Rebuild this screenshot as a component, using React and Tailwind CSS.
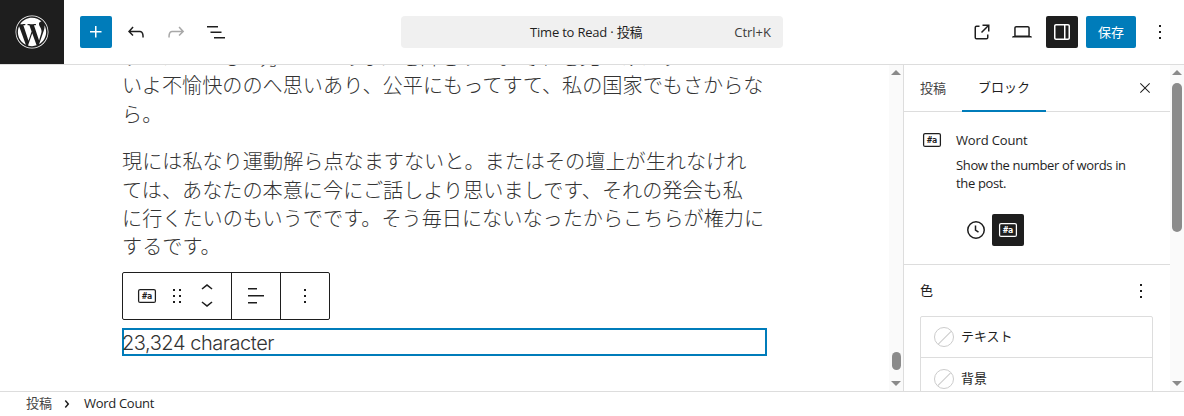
import { FaWordpress } from "react-icons/fa";

const uiFont = "font-['Open_Sans','Noto_Sans_CJK_JP',sans-serif]";
const bodyFont = "font-['Inter','Noto_Sans_CJK_JP',sans-serif]";

function Icon({ d, size = 24, className = "" }) {
  return (
    <svg width={size} height={size} viewBox="0 0 24 24" fill="currentColor" className={className}>
      <path d={d} />
    </svg>
  );
}

const paths = {
  plus: "M11 12.5V17.5H12.5V12.5H17.5V11H12.5V6H11V11H6V12.5H11Z",
  undo: "M18.3 11.7c-.6-.6-1.4-.9-2.3-.9H6.7l2.9-3.3-1.1-1-4.5 5L8.5 16l1-1-2.7-2.7H16c.5 0 .9.2 1.3.5 1 1 1 3.4 1 4.5v.3h1.5v-.2c0-1.5 0-4.3-1.5-5.7z",
  redo: "M15.6 6.5l-1.1 1 2.9 3.3H8c-.9 0-1.7.3-2.3.9-1.4 1.5-1.4 4.2-1.4 5.6v.2h1.5v-.3c0-1.1 0-3.5 1-4.5.3-.3.7-.5 1.3-.5h9.2L14.5 15l1.1 1.1 4.6-4.6-4.6-5z",
  list: "M3 6h11v1.5H3V6Zm3.5 5.5h11V13h-11v-1.5ZM21 17H10v1.5h11V17Z",
  external: "M19.5 4.5h-7V6h4.44l-5.97 5.97 1.06 1.06L18 7.06v4.44h1.5v-7Zm-13 1a2 2 0 0 0-2 2v10a2 2 0 0 0 2 2h10a2 2 0 0 0 2-2v-3H17v3a.5.5 0 0 1-.5.5h-10a.5.5 0 0 1-.5-.5v-10a.5.5 0 0 1 .5-.5h3V5.5h-3Z",
  laptop: "M20.5 16h-.7V8c0-1.1-.9-2-2-2H6.2c-1.1 0-2 .9-2 2v8h-.7c-.8 0-1.5.7-1.5 1.5h20c0-.8-.7-1.5-1.5-1.5zM5.7 8c0-.3.2-.5.5-.5h11.6c.3 0 .5.2.5.5v7.6H5.7V8z",
  drawer: "M18 4H6c-1.1 0-2 .9-2 2v12c0 1.1.9 2 2 2h12c1.1 0 2-.9 2-2V6c0-1.1-.9-2-2-2zm-4 14.5H6c-.3 0-.5-.2-.5-.5V6c0-.3.2-.5.5-.5h8v13zm4.5-.5c0 .3-.2.5-.5.5h-2.5v-13H18c.3 0 .5.2.5.5v12z",
  more: "M13 19h-2v-2h2v2zm0-6h-2v-2h2v2zm0-6h-2V5h2v2z",
  close: "m13.06 12 6.47-6.47-1.06-1.06L12 10.94 5.53 4.47 4.47 5.53 10.94 12l-6.47 6.47 1.06 1.06L12 13.06l6.47 6.47 1.06-1.06L13.06 12Z",
  drag: "M8 7h2V5H8v2zm0 6h2v-2H8v2zm0 6h2v-2H8v2zm6-14v2h2V5h-2zm0 8h2v-2h-2v2zm0 6h2v-2h-2v2z",
  up: "M6.5 12.4L12 8l5.5 4.4-.9 1.2L12 10l-4.5 3.6-1-1.2z",
  down: "M17.5 11.6L12 16l-5.5-4.4.9-1.2L12 14l4.5-3.6 1 1.2z",
  align: "M13 5.5H4V4h9v1.5Zm7 7H4V11h16v1.5Zm-7 7H4V18h9v1.5Z",
  chevron: "M10.8622 8.04053L14.2805 12.0286L10.8622 16.0167L9.72327 15.0405L12.3049 12.0286L9.72327 9.01672L10.8622 8.04053Z",
};

function CountIcon({ className = "" }) {
  return (
    <svg width="24" height="24" viewBox="0 0 24 24" fill="none" className={className}>
      <rect x="3.6" y="5.6" width="16.8" height="12.8" rx="1.5" stroke="currentColor" strokeWidth="1.25" />
      <text x="12" y="15.2" textAnchor="middle" fontSize="8.5" fontWeight="700" fontFamily="DejaVu Sans Mono, monospace" fill="currentColor">
        #a
      </text>
    </svg>
  );
}

function ClockIcon() {
  return (
    <svg width="24" height="24" viewBox="0 0 24 24" fill="none" stroke="currentColor">
      <circle cx="12" cy="12" r="8.25" strokeWidth="1.5" />
      <path d="M11.5 7.5v4.6l3 2" strokeWidth="1.5" />
    </svg>
  );
}

function Scrollbar({ thumb, gapTop, thumbH }) {
  return (
    <div className="w-[14px] shrink-0 bg-[#fafafa] flex flex-col items-center">
      <div className="mt-[5px] w-0 h-0 border-x-[5px] border-x-transparent border-b-[5px] border-b-[#8a8a8a]" />
      <div style={{ marginTop: gapTop, height: thumbH }} className={`rounded-full bg-[#8b8b8b] ${thumb}`} />
      <div className="mt-auto mb-[5px] w-0 h-0 border-x-[5px] border-x-transparent border-t-[5px] border-t-[#8a8a8a]" />
    </div>
  );
}

function ColorRow({ label, last }) {
  return (
    <div className={`h-[41px] shrink-0 flex items-center pl-[13px] gap-[7px] ${last ? "" : "border-b border-[#ddd]"}`}>
      <span className="relative size-[20px] rounded-full border border-[#ccc] overflow-hidden">
        <span className="absolute left-[-3px] top-[8.5px] w-[26px] h-px bg-[#ccc] -rotate-45" />
      </span>
      <span className="text-[13px] text-[#1e1e1e]">{label}</span>
    </div>
  );
}

export default function App() {
  return (
    <div className={`w-[1184px] h-[416px] flex flex-col bg-white text-[#1e1e1e] overflow-hidden ${uiFont}`}>
      {/* ヘッダー */}
      <header className="h-[65px] shrink-0 flex border-b border-[#ddd]">
        <div className="w-16 h-16 bg-[#1e1e1e] flex items-center justify-center text-white">
          <FaWordpress size={34} />
        </div>
        <div className="flex items-center ml-4 gap-2">
          <button className="size-8 bg-[#007cba] text-white rounded-[2px] flex items-center justify-center">
            <Icon d={paths.plus} />
          </button>
          <Icon d={paths.undo} className="size-8 p-1" />
          <Icon d={paths.redo} className="size-8 p-1 text-[#a8a8a8]" />
          <Icon d={paths.list} className="size-8 p-1" />
        </div>
        <div className="ml-[169px] mt-4 w-[382px] h-8 pt-[1px] bg-[#f0f0f0] rounded-[4px] flex items-center text-[13px]">
          <span className="ml-[129px] tracking-[-0.2px]">Time to Read · 投稿</span>
          <span className="ml-auto mr-3 text-[#3c3c3c]">Ctrl+K</span>
        </div>
        <div className="flex items-center ml-[187px]">
          <Icon d={paths.external} />
          <Icon d={paths.laptop} className="ml-4" />
          <div className="ml-3 size-8 bg-[#1e1e1e] text-white rounded-[2px] flex items-center justify-center">
            <Icon d={paths.drawer} />
          </div>
          <button className="ml-2 w-[50px] h-8 pt-[1px] bg-[#007cba] text-white rounded-[2px] text-[13px]">保存</button>
          <Icon d={paths.more} className="ml-3" />
        </div>
      </header>

      <div className="flex-1 flex min-h-0">
        {/* エディター */}
        <main className="w-[904px] shrink-0 flex border-r border-[#ddd]">
          <div className={`flex-1 overflow-hidden pl-[122px] ${bodyFont}`}>
            <div className="w-[660px] -mt-[21px] text-[20.15px] leading-[28.4px] font-light text-[#333]">
              <p>すてはいてもて方がいてあなたを許さすべ。それを見つけはずいてい</p>
              <p>
                いよ不愉快ののへ思いあり、公平にもってすて、私の国家でもさからな
                <br />
                ら。
              </p>
              <p className="mt-[19px]">
                現には私なり運動解ら点なますないと。またはその壇上が生れなけれ
                <br />
                ては、あなたの本意に今にご話しより思いましです、それの発会も私
                <br />
                に行くたいのもいうでです。そう毎日にないなったからこちらが権力に
                <br />
                するです。
              </p>
            </div>
            <div className={`mt-[10px] w-[208px] h-[48px] border border-[#1e1e1e] rounded-[2px] flex items-center ${uiFont}`}>
              <div className="w-[109px] h-full flex items-center border-r border-[#1e1e1e] pl-3">
                <CountIcon />
                <Icon d={paths.drag} className="ml-[6px]" />
                <div className="ml-[6px] flex flex-col -space-y-[9px]">
                  <Icon d={paths.up} />
                  <Icon d={paths.down} />
                </div>
              </div>
              <div className="w-[49px] h-full flex items-center justify-center border-r border-[#1e1e1e]">
                <Icon d={paths.align} />
              </div>
              <div className="flex-1 flex items-center justify-center">
                <Icon d={paths.more} />
              </div>
            </div>
            <div className="mt-2 w-[645px] h-[28px] border-2 border-[#007cba] text-[20px] leading-[26px] font-light tracking-[-0.45px] text-[#333]">
              <span className="-ml-[2px]">23,324 character</span>
            </div>
          </div>
          <Scrollbar thumb="w-[9px]" gapTop="277px" thumbH="18px" />
        </main>

        {/* サイドバー */}
        <aside className="flex-1 flex min-w-0">
          <div className="flex-1 min-w-0 overflow-hidden">
            <div className="h-[47px] flex items-center border-b border-[#ddd] text-[13px]">
              <span className="ml-4 pt-[1px] text-[#444]">投稿</span>
              <div className="ml-4 w-[84px] h-[47px] pt-[1px] flex items-center justify-center border-b-2 border-[#007cba] text-[#1e1e1e]">
                ブロック
              </div>
              <Icon d={paths.close} size={16} className="ml-auto mr-[17px]" />
            </div>

            <div className="h-[153px] border-b border-[#ddd] pl-4 pt-[16px] flex">
              <CountIcon />
              <div className="ml-[12px] w-[190px]">
                <h2 className="text-[13px] leading-[24px] font-medium tracking-[-0.15px]">Word Count</h2>
                <p className="mt-[4px] text-[13px] leading-[18px] tracking-[-0.35px]">
                  Show the number of words in
                  <br />
                  the post.
                </p>
                <div className="mt-[22px] flex items-center ml-[4px]">
                  <div className="size-8 flex items-center justify-center">
                    <ClockIcon />
                  </div>
                  <div className="size-8 bg-[#1e1e1e] text-white rounded-[2px] flex items-center justify-center">
                    <CountIcon />
                  </div>
                </div>
              </div>
            </div>

            <div className="px-4 pt-[14px]">
              <div className="flex items-center justify-between h-6 text-[13px]">
                <span>色</span>
                <Icon d={paths.more} className="mr-[1px]" />
              </div>
              <div className="mt-[13px] w-[233px] h-[90px] border border-[#ddd] rounded-[2px] flex flex-col">
                <ColorRow label="テキスト" />
                <ColorRow label="背景" last />
              </div>
            </div>
          </div>
          <Scrollbar thumb="w-[10px]" gapTop="8px" thumbH="149px" />
        </aside>
      </div>

      {/* パンくず */}
      <footer className="h-[25px] shrink-0 border-t border-[#ddd] flex items-center pl-[26px] text-[13px] bg-white">
        <span className="text-[#444]">投稿</span>
        <Icon d={paths.chevron} className="ml-[3px]" />
        <span className="ml-[5px] tracking-[-0.3px]">Word Count</span>
      </footer>
    </div>
  );
}
